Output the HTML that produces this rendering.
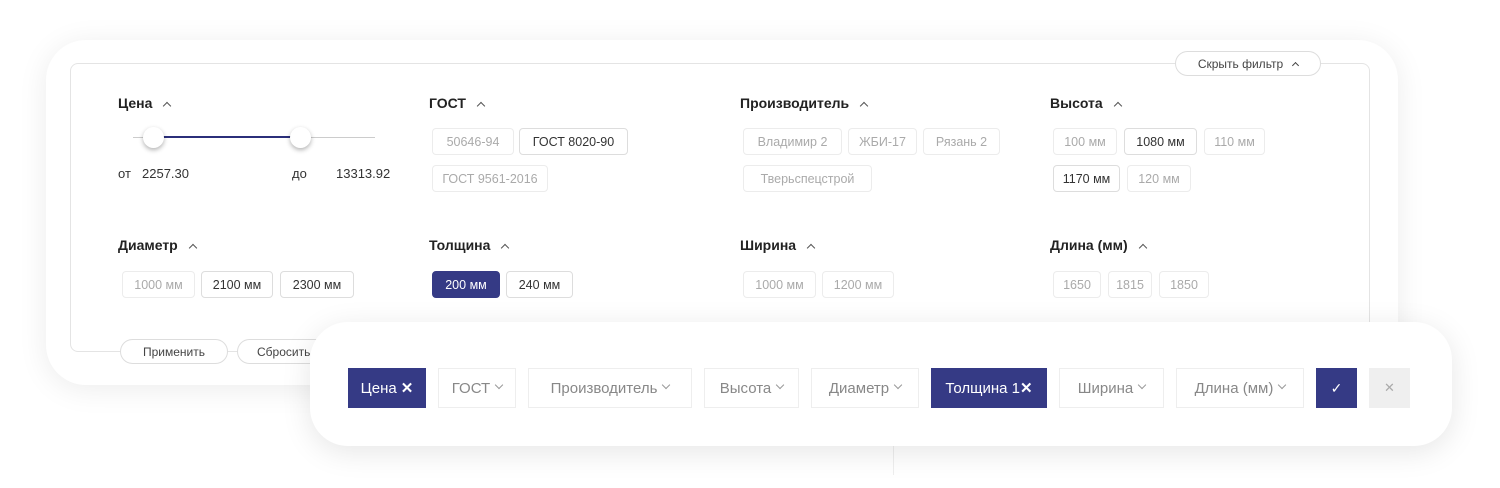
<!DOCTYPE html>
<html><head><meta charset="utf-8"><style>
*{box-sizing:border-box;margin:0;padding:0}
body{width:1500px;height:488px;background:#fff;position:relative;overflow:hidden;font-family:"Liberation Sans",sans-serif;color:#222}
.a{position:absolute}
.outer{left:46px;top:40px;width:1352px;height:345px;border-radius:40px;background:#fff;box-shadow:0 4px 30px rgba(0,0,0,.08)}
.inner{left:70px;top:63px;width:1300px;height:289px;border:1px solid #e4e4e4;border-radius:8px;background:#fff}
.h{font-weight:bold;font-size:14px;color:#222;top:95px}
.h .c{display:inline-block;width:6px;height:6px;border-left:1.5px solid #555;border-top:1.5px solid #555;transform:rotate(45deg);margin-left:12px;position:relative;top:1px}
.ch{height:27px;border:1px solid #ececec;border-radius:4px;font-size:12.5px;color:#aaa;display:flex;align-items:center;justify-content:center;background:#fff}
.ch.d{border-color:#ddd;color:#333}
.ch.f{background:#353a85;border-color:#353a85;color:#fff}
.bar{left:310px;top:322px;width:1142px;height:124px;border-radius:38px;background:#fff;box-shadow:0 6px 30px rgba(0,0,0,.1)}
.b{top:368px;height:40px;border:1px solid #eee;background:#fff;font-size:15px;color:#888;display:flex;align-items:center;justify-content:center}
.b.f{background:#353a85;color:#fff;border-color:#353a85}
.v{display:inline-block;width:6px;height:6px;border-right:1.3px solid #999;border-bottom:1.3px solid #999;transform:rotate(45deg);margin-left:6px;position:relative;top:-3px}
.pill{height:25px;border:1px solid #ddd;border-radius:13px;background:#fff;font-size:12px;color:#444;display:flex;align-items:center;justify-content:center}
.th{width:21px;height:21px;border-radius:50%;background:#fff;box-shadow:0 2px 5px rgba(0,0,0,.3);top:127px}
.t{font-size:13px;color:#333;top:166px}
</style></head><body>
<div class="a outer"></div>
<div class="a inner"></div>
<div class="a pill" style="left:1175px;top:51px;width:146px;">Скрыть фильтр <span style="display:inline-block;width:5px;height:5px;border-left:1.5px solid #444;border-top:1.5px solid #444;transform:rotate(45deg);margin-left:10px;position:relative;top:2px"></span></div>

<div class="a h" style="left:118px">Цена<span class="c"></span></div>
<div class="a h" style="left:429px">ГОСТ<span class="c"></span></div>
<div class="a h" style="left:740px">Производитель<span class="c"></span></div>
<div class="a h" style="left:1050px">Высота<span class="c"></span></div>
<div class="a h" style="left:118px;top:237px">Диаметр<span class="c"></span></div>
<div class="a h" style="left:429px;top:237px">Толщина<span class="c"></span></div>
<div class="a h" style="left:740px;top:237px">Ширина<span class="c"></span></div>
<div class="a h" style="left:1050px;top:237px">Длина (мм)<span class="c"></span></div>

<div class="a" style="left:133px;top:137px;width:242px;height:1px;background:#ccc"></div>
<div class="a" style="left:153px;top:136px;width:147px;height:2px;background:#2b2f7a"></div>
<div class="a th" style="left:143px"></div>
<div class="a th" style="left:290px"></div>
<div class="a t" style="left:118px">от</div>
<div class="a t" style="left:142px">2257.30</div>
<div class="a t" style="left:292px">до</div>
<div class="a t" style="left:336px">13313.92</div>

<div class="a ch" style="left:432px;top:128px;width:82px">50646-94</div>
<div class="a ch d" style="left:519px;top:128px;width:109px">ГОСТ 8020-90</div>
<div class="a ch" style="left:432px;top:165px;width:116px">ГОСТ 9561-2016</div>

<div class="a ch" style="left:743px;top:128px;width:99px">Владимир 2</div>
<div class="a ch" style="left:848px;top:128px;width:69px">ЖБИ-17</div>
<div class="a ch" style="left:923px;top:128px;width:77px">Рязань 2</div>
<div class="a ch" style="left:743px;top:165px;width:129px">Тверьспецстрой</div>

<div class="a ch" style="left:1053px;top:128px;width:64px">100 мм</div>
<div class="a ch d" style="left:1124px;top:128px;width:73px">1080 мм</div>
<div class="a ch" style="left:1204px;top:128px;width:61px">110 мм</div>
<div class="a ch d" style="left:1053px;top:165px;width:67px">1170 мм</div>
<div class="a ch" style="left:1127px;top:165px;width:64px">120 мм</div>

<div class="a ch" style="left:122px;top:271px;width:73px">1000 мм</div>
<div class="a ch d" style="left:201px;top:271px;width:72px">2100 мм</div>
<div class="a ch d" style="left:280px;top:271px;width:74px">2300 мм</div>
<div class="a ch f" style="left:432px;top:271px;width:68px">200 мм</div>
<div class="a ch d" style="left:506px;top:271px;width:67px">240 мм</div>
<div class="a ch" style="left:743px;top:271px;width:73px">1000 мм</div>
<div class="a ch" style="left:822px;top:271px;width:72px">1200 мм</div>
<div class="a ch" style="left:1053px;top:271px;width:48px">1650</div>
<div class="a ch" style="left:1108px;top:271px;width:44px">1815</div>
<div class="a ch" style="left:1159px;top:271px;width:50px">1850</div>

<div class="a pill" style="left:120px;top:339px;width:108px">Применить</div>
<div class="a pill" style="left:237px;top:339px;width:100px;justify-content:flex-start;padding-left:19px">Сбросить</div>

<div class="a" style="left:893px;top:440px;width:1px;height:35px;background:#eee"></div>
<div class="a bar"></div>
<div class="a b f" style="left:348px;width:78px">Цена <b style="margin-left:4px">✕</b></div>
<div class="a b" style="left:438px;width:78px">ГОСТ<span class="v"></span></div>
<div class="a b" style="left:528px;width:164px">Производитель<span class="v"></span></div>
<div class="a b" style="left:704px;width:95px">Высота<span class="v"></span></div>
<div class="a b" style="left:811px;width:108px">Диаметр<span class="v"></span></div>
<div class="a b f" style="left:931px;width:116px">Толщина 1<b>✕</b></div>
<div class="a b" style="left:1059px;width:105px">Ширина<span class="v"></span></div>
<div class="a b" style="left:1176px;width:128px">Длина (мм)<span class="v"></span></div>
<div class="a b f" style="left:1316px;width:41px;font-size:14px">✓</div>
<div class="a b" style="left:1369px;width:41px;background:#efefef;border-color:#efefef;color:#aaa;font-size:13px">✕</div>
</body></html>
